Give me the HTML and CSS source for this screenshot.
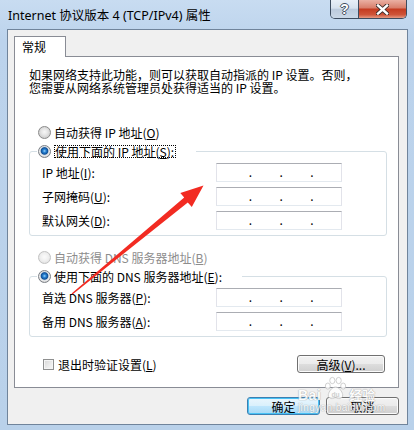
FILE: index.html
```html
<!DOCTYPE html>
<html lang="zh-CN">
<head>
<meta charset="utf-8">
<title>Internet 协议版本 4 (TCP/IPv4) 属性</title>
<link rel="stylesheet" href="styles.css">
</head>
<body>
<div class="window">
  <div class="titlebar">
    <span class="title">Internet 协议版本 4 (TCP/IPv4) 属性</span>
    <div class="caption-btns">
      <span class="cap-btn help">?</span>
      <span class="cap-btn close">
        <svg width="13" height="11" viewBox="0 0 13 11">
          <path d="M2 1.5 L11 9.5 M11 1.5 L2 9.5" stroke="#3a2a28" stroke-width="4.2" stroke-linecap="square"/>
          <path d="M2 1.5 L11 9.5 M11 1.5 L2 9.5" stroke="#ffffff" stroke-width="2.4" stroke-linecap="square"/>
        </svg>
      </span>
    </div>
  </div>
  <div class="client">
    <div class="tabs"><span class="tab">常规</span></div>
    <div class="panel">
      <p class="intro">如果网络支持此功能，则可以获取自动指派的 IP 设置。否则，<br>您需要从网络系统管理员处获得适当的 IP 设置。</p>
      <div class="opt opt-first"><span class="radio"></span><span>自动获得 IP 地址(<u>O</u>)</span></div>
      <fieldset class="group">
        <legend class="legend"><span class="opt opt-legend"><span class="radio checked"></span><span class="focus">使用下面的 IP 地址(<u>S</u>):</span></span></legend>
        <div class="rows">
          <span class="lbl">IP 地址(<u>I</u>):</span>
          <span class="ipbox"><span class="seg"></span><span class="dot">.</span><span class="seg"></span><span class="dot">.</span><span class="seg"></span><span class="dot">.</span><span class="seg"></span></span>
          <span class="lbl">子网掩码(<u>U</u>):</span>
          <span class="ipbox"><span class="seg"></span><span class="dot">.</span><span class="seg"></span><span class="dot">.</span><span class="seg"></span><span class="dot">.</span><span class="seg"></span></span>
          <span class="lbl">默认网关(<u>D</u>):</span>
          <span class="ipbox"><span class="seg"></span><span class="dot">.</span><span class="seg"></span><span class="dot">.</span><span class="seg"></span><span class="dot">.</span><span class="seg"></span></span>
        </div>
      </fieldset>
      <div class="opt opt-dns disabled"><span class="radio"></span><span>自动获得 DNS 服务器地址(<u>B</u>)</span></div>
      <fieldset class="group group-dns">
        <legend class="legend"><span class="opt opt-legend"><span class="radio checked"></span><span>使用下面的 DNS 服务器地址(<u>E</u>):</span></span></legend>
        <div class="rows">
          <span class="lbl">首选 DNS 服务器(<u>P</u>):</span>
          <span class="ipbox"><span class="seg"></span><span class="dot">.</span><span class="seg"></span><span class="dot">.</span><span class="seg"></span><span class="dot">.</span><span class="seg"></span></span>
          <span class="lbl">备用 DNS 服务器(<u>A</u>):</span>
          <span class="ipbox"><span class="seg"></span><span class="dot">.</span><span class="seg"></span><span class="dot">.</span><span class="seg"></span><span class="dot">.</span><span class="seg"></span></span>
        </div>
      </fieldset>
      <div class="footer-row">
        <span class="check"><span class="checkbox"></span><span>退出时验证设置(<u>L</u>)</span></span>
        <span class="btn adv">高级(<u>V</u>)...</span>
      </div>
    </div>
    <div class="actions">
      <span class="btn default">确定</span>
      <span class="btn">取消</span>
    </div>
  </div>

  <svg class="arrow" width="414" height="430" viewBox="0 0 414 430">
    <polygon points="71.6,293.4 184.2,197.6 180.3,193.1 203.5,185.5 191.8,207 187.8,202.4 72.4,294.6" fill="#f22b22"/>
  </svg>

  <div class="watermark">
    <div class="wm-row">
      <span class="wm-bai">Bai</span>
      <svg class="wm-paw" width="23" height="24" viewBox="0 0 24 24">
        <g fill="#ffffff" stroke="#b8b8b8" stroke-width="0.8">
          <ellipse cx="4" cy="10" rx="2.6" ry="3.2"/>
          <ellipse cx="8.7" cy="4.2" rx="2.7" ry="3.3"/>
          <ellipse cx="15.3" cy="4.2" rx="2.7" ry="3.3"/>
          <ellipse cx="20" cy="10" rx="2.6" ry="3.2"/>
          <path d="M12 11 C8 11 5 16 4.5 19 C4 22 7 23.5 9 23 C10.5 22.7 11 22.3 12 22.3 C13 22.3 13.5 22.7 15 23 C17 23.5 20 22 19.5 19 C19 16 16 11 12 11 Z"/>
        </g>
        <text x="12" y="21" text-anchor="middle" font-family="Liberation Sans, sans-serif" font-weight="bold" font-size="7" fill="#c9c9c9">du</text>
      </svg>
      <span class="wm-jy">经验</span>
    </div>
    <div class="wm-url">jingyan.baidu.com</div>
  </div>
</div>
</body>
</html>
```

FILE: styles.css
```css
html, body {
  margin: 0;
  padding: 0;
}

body {
  width: 414px;
  height: 430px;
  overflow: hidden;
}

.window {
  position: relative;
  width: 414px;
  height: 430px;
  display: flex;
  flex-direction: column;
  background: linear-gradient(180deg, #c8dcf1 0%, #bcd3ec 40px, #b9d1ea 100%);
  font-family: "Noto Sans CJK SC", sans-serif;
  font-size: 12px;
  color: #000;
}

/* ---------- title bar ---------- */
.titlebar {
  flex: none;
  height: 29px;
  display: flex;
}

.title {
  flex: 1;
  padding: 8px 0 0 8px;
  line-height: 16px;
  font-family: "Noto Sans", "Noto Sans CJK SC", sans-serif;
  font-size: 12.5px;
  color: #000;
}

.caption-btns {
  align-self: flex-start;
  display: flex;
  height: 19px;
  margin-right: 7px;
  box-sizing: border-box;
  border: 1px solid #3d4c5f;
  border-top: none;
  border-radius: 0 0 5px 5px;
  overflow: hidden;
}

.cap-btn {
  display: flex;
  align-items: center;
  justify-content: center;
  height: 18px;
}

.help {
  width: 27px;
  border-right: 1px solid #3d4c5f;
  background: linear-gradient(180deg, #e8eff7 0%, #d7e2ee 45%, #bccbdd 52%, #cad8e7 100%);
  color: #fff;
  font-family: "Liberation Sans", sans-serif;
  font-weight: bold;
  font-size: 14px;
  text-shadow: 1px 0 0 #44505e, -1px 0 0 #44505e, 0 1px 0 #44505e, 0 -1px 0 #44505e;
}

.close {
  width: 47px;
  background: linear-gradient(180deg, #eab0a3 0%, #d9806d 42%, #c53c22 52%, #cf553a 82%, #e69a84 100%);
}

/* ---------- client area ---------- */
.client {
  flex: none;
  height: 396px;
  margin: 0 6px 0 7px;
  box-sizing: border-box;
  border: 1px solid #70849b;
  background: #f0f0f0;
  padding: 6px 8px 0 6px;
  display: flex;
  flex-direction: column;
}

.tabs {
  display: flex;
}

.tab {
  position: relative;
  z-index: 1;
  width: 52px;
  height: 21px;
  box-sizing: border-box;
  border: 1px solid #898c95;
  border-bottom: none;
  background: #fff;
  margin-bottom: -1px;
  padding-left: 7px;
  line-height: 19px;
}

.panel {
  flex: none;
  height: 332px;
  box-sizing: border-box;
  border: 1px solid #898c95;
  background: #fff;
  padding: 0 11px 0 14px;
  display: flex;
  flex-direction: column;
}

.intro {
  margin: 11px 0 0;
  line-height: 13px;
}

.opt {
  display: flex;
  align-items: center;
  height: 14px;
  gap: 3px;
  padding-left: 9px;
  white-space: nowrap;
}

.opt-first {
  margin-top: 31px;
}

.opt-dns {
  margin-top: 14px;
}

.opt.disabled {
  color: #8d8d8d;
}

.opt-legend {
  padding-left: 0;
}

.radio {
  flex: none;
  width: 13px;
  height: 13px;
  box-sizing: border-box;
  border-radius: 50%;
  border: 1px solid #8a8a8a;
  background: radial-gradient(circle at 50% 45%, #f7f7f7 0, #e6e6e6 3px, #cfcfcf 6px);
}

.radio.checked {
  border-color: #7b7f86;
  background: radial-gradient(circle at 50% 45%, #9fd3fa 0, #2a86d6 1.5px, #0f4f97 3.3px, #cfd7df 4.2px, #ededed 5px, #d0d0d0 6px);
}

.disabled .radio {
  border-color: #c2c2c2;
  background: radial-gradient(circle at 50% 45%, #fbfbfb 0, #efefef 4px, #e4e4e4 6px);
}

.focus {
  border: 1px dotted #000;
  line-height: 11px;
  padding: 0 1px 0 0;
}

/* ---------- group boxes ---------- */
.group {
  margin: 5px 0 0;
  padding: 5px 0 5px 7px;
  border: 1px solid #d5dfe5;
  border-radius: 3px;
  min-width: 0;
}

.legend {
  padding: 0 20px 0 1px;
  margin: 0;
}

.rows {
  display: grid;
  grid-template-columns: 179px 126px;
  row-gap: 5px;
}

.lbl {
  padding-left: 5px;
  line-height: 19px;
  white-space: nowrap;
}

.ipbox {
  height: 19px;
  box-sizing: border-box;
  border: 1px solid;
  border-color: #abadb3 #e2e3ea #e3e9ef #e2e3ea;
  background: #fff;
  display: flex;
  padding-left: 3px;
  line-height: 19px;
}

.seg {
  flex: 1;
}

.dot {
  flex: none;
  width: 2px;
  line-height: 16px;
  font-size: 12px;
}

/* ---------- footer of panel ---------- */
.footer-row {
  display: flex;
  align-items: center;
  height: 18px;
  margin-top: 18px;
}

.check {
  display: flex;
  align-items: center;
  gap: 4px;
  margin-left: 14px;
  white-space: nowrap;
}

.checkbox {
  width: 11px;
  height: 11px;
  box-sizing: border-box;
  border: 1px solid #8e8f8f;
  background: linear-gradient(135deg, #d6d6d6 0%, #ececec 60%, #f7f7f7 100%);
  box-shadow: inset 0 0 0 1px #f4f4f4;
}

/* ---------- buttons ---------- */
.btn {
  display: flex;
  align-items: center;
  justify-content: center;
  height: 18px;
  box-sizing: border-box;
  border: 1px solid #707070;
  border-radius: 3px;
  background: linear-gradient(180deg, #f2f2f2 0%, #ebebeb 50%, #dddddd 51%, #cfcfcf 100%);
  box-shadow: inset 0 0 0 1px #fbfbfb;
  white-space: nowrap;
}

.btn.default {
  border-color: #3c7fb1;
  background: linear-gradient(180deg, #eaf6fd 0%, #d9f0fc 50%, #bee6fd 51%, #a7d9f5 100%);
  box-shadow: inset 0 0 0 1px #48c2f5;
}

.adv {
  width: 88px;
  margin-left: auto;
  margin-right: 2px;
}

.actions {
  display: flex;
  justify-content: flex-end;
  gap: 6px;
  margin-top: 9px;
}

.actions .btn {
  width: 73px;
}

/* ---------- overlays ---------- */
.arrow {
  position: absolute;
  left: 0;
  top: 0;
  pointer-events: none;
}

.watermark {
  position: absolute;
  left: 298px;
  top: 376px;
  opacity: 0.85;
  pointer-events: none;
}

.wm-row {
  display: flex;
  align-items: flex-end;
  height: 26px;
}

.wm-bai,
.wm-jy {
  color: #fff;
  font-weight: bold;
  text-shadow: 0 0 1px #9c9c9c, 0 0 1px #9c9c9c;
  line-height: 14px;
}

.wm-bai {
  font-family: "Liberation Sans", sans-serif;
  font-size: 14px;
  letter-spacing: 0.5px;
}

.wm-paw {
  margin: 0 2px 0 3px;
  align-self: flex-start;
}

.wm-jy {
  font-size: 13px;
}

.wm-url {
  color: #fff;
  font-family: "Liberation Sans", sans-serif;
  font-size: 10px;
  line-height: 11px;
  letter-spacing: 0.4px;
  text-shadow: 0 0 1px #a0a0a0, 0 0 1px #a0a0a0;
}
```
